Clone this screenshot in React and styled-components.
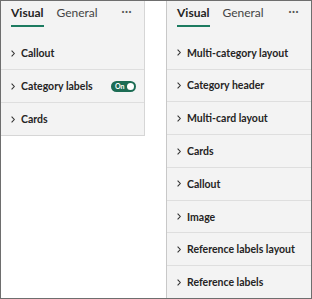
import React from "react";
import styled, { createGlobalStyle } from "styled-components";

const Global = createGlobalStyle`
  body {
    margin: 0;
    background: #ffffff;
    font-family: Lato, "Noto Sans", sans-serif;
  }
`;

const Frame = styled.div`
  width: 312px;
  height: 299px;
  box-sizing: border-box;
  border: 1px solid #6e6e6e;
  display: flex;
  align-items: flex-start;
  gap: 21px;
  background: #ffffff;
`;

const Pane = styled.div`
  width: ${(p) => p.width}px;
  height: ${(p) => (p.full ? "100%" : "auto")};
  box-sizing: border-box;
  background: #f3f3f3;
  border-right: ${(p) => (p.full ? "none" : "1px solid #d6d6d6")};
  border-left: ${(p) => (p.full ? "1px solid #c8c8c8" : "none")};
  border-bottom: ${(p) => (p.full ? "none" : "1px solid #d6d6d6")};
  display: flex;
  flex-direction: column;
`;

const Tabs = styled.div`
  height: 35px;
  display: flex;
  align-items: flex-start;
  padding: 4px 12px 0 10px;
  box-sizing: border-box;
  gap: 13px;
`;

const Tab = styled.div`
  font-size: 12px;
  font-weight: ${(p) => (p.active ? 700 : 400)};
  color: ${(p) => (p.active ? "#252423" : "#444")};
  padding-bottom: 4px;
  border-bottom: 2px solid ${(p) => (p.active ? "#1c7b60" : "transparent")};
  line-height: 16px;
`;

const More = styled.div`
  margin-left: auto;
  font-size: 11px;
  font-weight: 700;
  color: #555;
  letter-spacing: 0.5px;
  line-height: 12px;
`;

const Row = styled.div`
  height: 33px;
  box-sizing: border-box;
  border-top: 1px solid ${(p) => (p.first ? "transparent" : "#dedede")};
  display: flex;
  align-items: center;
  padding: 0 8px 0 10px;
  font-size: 10.5px;
  font-weight: 700;
  color: #252423;
  white-space: nowrap;
`;

const Chevron = styled.svg`
  width: 4px;
  height: 7px;
  margin-right: 6px;
  flex: none;
`;

const Toggle = styled.div`
  margin-left: auto;
  width: 25px;
  height: 11px;
  border-radius: 6px;
  background: #1c6c54;
  display: flex;
  align-items: center;
  justify-content: space-between;
  padding: 0 2px 0 4px;
  box-sizing: border-box;
  font-size: 7px;
  font-weight: 700;
  color: #fff;
  &::after {
    content: "";
    width: 7px;
    height: 7px;
    border-radius: 50%;
    background: #fff;
  }
`;

function Section({ title, first, toggle }) {
  return (
    <Row first={first}>
      <Chevron viewBox="0 0 4 7">
        <path d="M0.6 0.6 L3.3 3.5 L0.6 6.4" fill="none" stroke="#333" strokeWidth="1.1" />
      </Chevron>
      <span>{title}</span>
      {toggle && <Toggle>On</Toggle>}
    </Row>
  );
}

function Header() {
  return (
    <Tabs>
      <Tab active>Visual</Tab>
      <Tab>General</Tab>
      <More>···</More>
    </Tabs>
  );
}

const rightItems = [
  "Multi-category layout",
  "Category header",
  "Multi-card layout",
  "Cards",
  "Callout",
  "Image",
  "Reference labels layout",
  "Reference labels",
];

export default function App() {
  return (
    <>
      <Global />
      <Frame>
        <Pane width={144}>
          <Header />
          <Section title="Callout" first />
          <Section title="Category labels" toggle />
          <Section title="Cards" />
        </Pane>
        <Pane width={145} full>
          <Header />
          {rightItems.map((t, i) => (
            <Section key={t} title={t} first={i === 0} />
          ))}
        </Pane>
      </Frame>
    </>
  );
}
